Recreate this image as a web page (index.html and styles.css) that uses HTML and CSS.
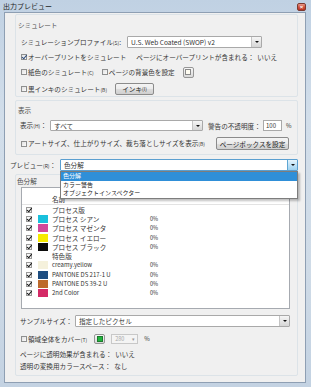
FILE: index.html
```html
<!DOCTYPE html>
<html lang="ja">
<head>
<meta charset="utf-8">
<title>出力プレビュー</title>
<link rel="stylesheet" href="styles.css">
</head>
<body>
<div class="window">
  <div class="titlebar">
    <span class="title">出力プレビュー</span>
    <span class="close">×</span>
  </div>
  <div class="panel">
    <div class="group g1">
      <div class="heading">シミュレート</div>
      <div class="row r1">
        <span class="lbl w-profile">シミュレーションプロファイル<span class="mn">(S)</span>:</span>
        <div class="select sel-profile"><span class="val">U.S. Web Coated (SWOP) v2</span><span class="arrow"></span></div>
      </div>
      <div class="row r2">
        <span class="cb checked"></span><span>オーバープリントをシミュレート</span>
        <span class="info">ページにオーバープリントが含まれる：&nbsp;&nbsp;いいえ</span>
      </div>
      <div class="row r3">
        <span class="cb"></span><span>紙色のシミュレート<span class="mn">(C)</span></span>
        <span class="cb cb-gap"></span><span>ページの背景色を設定</span>
        <span class="swbtn bg-btn"><span class="sw sw-paper"></span></span>
      </div>
      <div class="row r4">
        <span class="cb"></span><span>黒インキのシミュレート<span class="mn">(B)</span></span>
        <span class="btn btn-ink">インキ<span class="mn">(I)</span></span>
      </div>
    </div>

    <div class="group g2">
      <div class="heading">表示</div>
      <div class="row r5">
        <span class="lbl w-show">表示<span class="mn">(H)</span>：</span>
        <div class="select sel-show"><span class="val">すべて</span><span class="arrow"></span></div>
        <span class="lbl w-warn">警告の不透明度：</span>
        <span class="input in-op">100</span>
        <span class="pct">%</span>
      </div>
      <div class="row r6">
        <span class="cb"></span><span>アートサイズ、仕上がりサイズ、裁ち落としサイズを表示<span class="mn">(B)</span></span>
        <span class="btn btn-box">ページボックスを設定</span>
      </div>
    </div>

    <div class="row preview-row">
      <span class="lbl w-prev">プレビュー<span class="mn">(R)</span>：</span>
      <div class="select sel-prev focus">
        <span class="val">色分解</span><span class="arrow arrow-focus"></span>
        <div class="droplist">
          <div class="opt sel">色分解</div>
          <div class="opt">カラー警告</div>
          <div class="opt">オブジェクトインスペクター</div>
        </div>
      </div>
    </div>

    <div class="group g3">
      <div class="heading">色分解</div>
      <div class="list">
        <div class="list-head"><span class="hname">名前</span></div>
        <div class="lrow"><span class="lcb"></span><span class="swatch none"></span><span class="name">プロセス版</span><span class="lpct"></span></div>
        <div class="lrow"><span class="lcb"></span><span class="swatch c-cyan"></span><span class="name">プロセス シアン</span><span class="lpct">0%</span></div>
        <div class="lrow"><span class="lcb"></span><span class="swatch c-mag"></span><span class="name">プロセス マゼンタ</span><span class="lpct">0%</span></div>
        <div class="lrow"><span class="lcb"></span><span class="swatch c-yel"></span><span class="name">プロセス イエロー</span><span class="lpct">0%</span></div>
        <div class="lrow"><span class="lcb"></span><span class="swatch c-blk"></span><span class="name">プロセス ブラック</span><span class="lpct">0%</span></div>
        <div class="lrow"><span class="lcb"></span><span class="swatch none"></span><span class="name">特色版</span><span class="lpct"></span></div>
        <div class="lrow"><span class="lcb"></span><span class="swatch c-cream"></span><span class="name lat">creamy.yellow</span><span class="lpct">0%</span></div>
        <div class="lrow"><span class="lcb"></span><span class="swatch c-blue"></span><span class="name lat">PANTONE DS 217-1 U</span><span class="lpct">0%</span></div>
        <div class="lrow"><span class="lcb"></span><span class="swatch c-brown"></span><span class="name lat">PANTONE DS 39-2 U</span><span class="lpct">0%</span></div>
        <div class="lrow"><span class="lcb"></span><span class="swatch c-red"></span><span class="name lat">2nd Color</span><span class="lpct">0%</span></div>
      </div>
      <div class="row r7">
        <span class="lbl w-sample">サンプルサイズ：</span>
        <div class="select sel-sample"><span class="val">指定したピクセル</span><span class="arrow"></span></div>
      </div>
      <div class="row r8">
        <span class="cb"></span><span>領域全体をカバー<span class="mn">(T)</span></span>
        <span class="swbtn green-btn"><span class="sw sw-green"></span></span>
        <span class="spin">280<span class="spin-arrow">▾</span></span>
        <span class="pct pct2">%</span>
      </div>
      <div class="row r9 txt">ページに透明効果が含まれる：&nbsp;&nbsp;いいえ</div>
      <div class="row r10 txt">透明の変換用カラースペース：&nbsp;&nbsp;なし</div>
    </div>
  </div>
</div>
</body>
</html>
```

FILE: styles.css
```css
* { box-sizing: border-box; margin: 0; padding: 0; }

body {
  margin: 0;
  font-family: "Noto Sans CJK JP", "Liberation Sans", sans-serif;
  font-size: 6.6px;
  color: #353535;
  line-height: 10px;
}

.window {
  width: 311px;
  height: 387px;
  padding: 0 5px 4px 4px;
  background: linear-gradient(180deg, #c0d1e3 0%, #d2deea 30%, #cfdbe7 70%, #c3d2e2 100%);
  display: flex;
  flex-direction: column;
}

.titlebar {
  height: 12px;
  flex: none;
  display: flex;
  align-items: center;
  justify-content: space-between;
}

.title {
  font-size: 7px;
  color: #1e1e1e;
  line-height: 12px;
  margin-left: -1px;
}

.close {
  width: 9px;
  height: 8px;
  margin-top: 1px;
  background: linear-gradient(180deg, #e79a8a 0%, #d0523e 50%, #b8321f 100%);
  border: 1px solid #7c3a30;
  border-radius: 2px;
  color: #fff;
  font-size: 6px;
  line-height: 6px;
  text-align: center;
  font-family: "Liberation Sans", sans-serif;
  font-weight: bold;
}

.panel {
  flex: 1;
  background: #f0f0f0;
  border: 1px solid #8e9fb3;
  padding: 1px 7px 0 5px;
  display: flex;
  flex-direction: column;
}

.group {
  margin-left: 5px;
  border: 1px solid #dce3e8;
  border-radius: 2px;
  padding-left: 2px;
  display: flex;
  flex-direction: column;
  align-items: stretch;
}

.heading {
  height: 10px;
  line-height: 10px;
  color: #4e4e4e;
  width: fit-content;
}

.row {
  display: flex;
  align-items: center;
  white-space: nowrap;
}

.mn { font-size: 5px; }

/* group 1 */
.g1 { padding-top: 5px; padding-bottom: 1px; }
.g1 .row { height: 12px; margin-left: 3px; }
.r1 { margin-top: 6px; }
.r2 { margin-top: 3px; }
.r3 { margin-top: 3px; }
.r4 { margin-top: 5px; }

.w-profile { width: 106px; }

.select {
  display: flex;
  align-items: center;
  height: 12px;
  background: #fff;
  border: 1px solid #a9a9a9;
  border-radius: 1px;
  padding-left: 3px;
  position: relative;
}
.select .val { flex: 1; line-height: 10px; overflow: hidden; }

.arrow {
  width: 10px;
  height: 10px;
  flex: none;
  background: linear-gradient(180deg, #f6f6f6 0%, #e6e6e6 50%, #d6d6d6 100%);
  border-left: 1px solid #c4c4c4;
  display: flex;
  align-items: center;
  justify-content: center;
}
.arrow::after {
  content: "";
  border-left: 2px solid transparent;
  border-right: 2px solid transparent;
  border-top: 2px solid #111;
}
.arrow-focus {
  background: linear-gradient(180deg, #e6f4fc 0%, #bfe2f7 50%, #9fd2f0 100%);
  border-left: 1px solid #5ea6d3;
}

.sel-profile { width: 135px; }

.info { margin-left: 10px; }

.cb {
  width: 6px;
  height: 6px;
  flex: none;
  border: 1px solid #8e8f8f;
  background: linear-gradient(135deg, #e2e2e2, #fbfbfb);
  margin-right: 1px;
  position: relative;
}
.cb.checked::after {
  content: "";
  position: absolute;
  left: 1px;
  top: -1px;
  width: 2px;
  height: 3.5px;
  border-right: 1px solid #2b4a7a;
  border-bottom: 1px solid #2b4a7a;
  transform: rotate(40deg);
}
.cb-gap { margin-left: 8px; }

.swbtn {
  width: 11px;
  height: 11px;
  flex: none;
  border: 1px solid #969696;
  border-radius: 2px;
  background: linear-gradient(180deg, #f7f7f7 0%, #e8e8e8 50%, #d9d9d9 100%);
  display: flex;
  align-items: center;
  justify-content: center;
}
.bg-btn { margin-left: 8px; }
.sw { width: 6px; height: 6px; border: 1px solid #8a8a8a; }
.sw-paper { background: #fffdf2; }

.btn {
  height: 12px;
  flex: none;
  border: 1px solid #8b8b8b;
  border-radius: 2px;
  background: linear-gradient(180deg, #f4f4f4 0%, #ebebeb 50%, #dddddd 51%, #cfcfcf 100%);
  display: flex;
  align-items: center;
  justify-content: center;
  color: #222;
}
.btn-ink { width: 39px; margin-left: 8px; }

/* group 2 */
.g2 { margin-top: 3px; padding-top: 4px; padding-bottom: 4px; }
.r5 { margin-top: 5px; height: 11px; margin-left: 2px; }
.r5 .select { height: 11px; }
.r5 .arrow { height: 9px; }
.w-show { width: 30px; }
.sel-show { width: 153px; }
.w-warn { width: 55px; margin-left: 5px; }
.input {
  width: 19px;
  height: 11px;
  background: #fff;
  border: 1px solid #a9a9a9;
  padding-left: 2px;
  line-height: 9px;
  font-size: 6px;
}
.pct { margin-left: 4px; font-size: 6px; }

.r6 { margin-top: 6px; height: 13px; margin-left: 3px; }
.btn-box { width: 73px; height: 13px; margin-left: auto; margin-right: 8px; }

/* preview */
.preview-row { margin-top: 4px; height: 12px; }
.w-prev { width: 50px; }
.sel-prev { flex: 1; }
.sel-prev.focus { border-color: #5b9fd0; }

.droplist {
  position: absolute;
  left: -1px;
  right: -1px;
  top: 11px;
  height: 28px;
  background: #fff;
  border: 1px solid #7d7d7d;
  box-shadow: 2px 2px 2px rgba(0, 0, 0, 0.25);
  z-index: 5;
}
.opt {
  height: 8.7px;
  line-height: 8.7px;
  font-size: 6px;
  padding-left: 2px;
  color: #222;
}
.opt.sel {
  background: #2f8fd8;
  color: #fff;
}

/* group 3 */
.g3 { margin-top: 3px; padding-top: 1px; padding-bottom: 4px; }
.g3 .heading { margin-left: -1px; }

.list {
  margin-top: 1px;
  margin-left: 3px;
  margin-right: 7px;
  height: 122px;
  background: #fff;
  border: 1px solid #a6aab0;
}
.list-head {
  height: 17px;
  border-bottom: 1px solid #e3e3e3;
  display: flex;
  align-items: flex-end;
  padding-bottom: 1px;
}
.hname { margin-left: 30px; color: #333; line-height: 8px; }

.lrow {
  height: 9.3px;
  display: flex;
  align-items: center;
  padding-left: 4px;
}
.lcb {
  width: 6px;
  height: 6px;
  flex: none;
  border: 1px solid #9a9a9a;
  background: #f7f7f7;
  position: relative;
}
.lcb::after {
  content: "";
  position: absolute;
  left: 1px;
  top: -1px;
  width: 2px;
  height: 3.5px;
  border-right: 1px solid #111;
  border-bottom: 1px solid #111;
  transform: rotate(40deg);
}
.swatch {
  width: 10px;
  height: 8px;
  flex: none;
  margin-left: 6px;
}
.swatch.none { background: transparent; }
.c-cyan { background: #19c0dc; }
.c-mag { background: #d2489a; }
.c-yel { background: #f6e900; }
.c-blk { background: #0c0c0c; }
.c-cream { background: #f5f1dc; }
.c-blue { background: #1d4d80; }
.c-brown { background: #bd6a2c; }
.c-red { background: #d42a66; }

.name { margin-left: 4px; width: 98px; color: #333; }
.name.lat { font-size: 6px; }
.lpct { font-size: 5.5px; color: #333; }

.r7 { margin-top: 6px; height: 12px; margin-left: 2px; margin-right: 7px; }
.w-sample { width: 55px; }
.sel-sample { flex: 1; }

.r8 { margin-top: 7px; height: 10px; margin-left: 3px; }
.green-btn { margin-left: 7px; height: 10px; }
.sw-green { background: #22b53e; border-color: #1d7a2e; }
.spin {
  margin-left: 6px;
  width: 27px;
  height: 10px;
  border: 1px solid #c8c8c8;
  background: #f4f4f4;
  color: #a8a8a8;
  display: flex;
  align-items: center;
  padding-left: 3px;
  font-size: 5.5px;
  line-height: 8px;
}
.spin-arrow { margin-left: auto; margin-right: 2px; font-size: 5px; color: #9a9a9a; }
.pct2 { margin-left: 6px; }

.txt { height: 10px; margin-left: 2px; }
.r9 { margin-top: 5px; }
.r10 { margin-top: 2px; }
```
